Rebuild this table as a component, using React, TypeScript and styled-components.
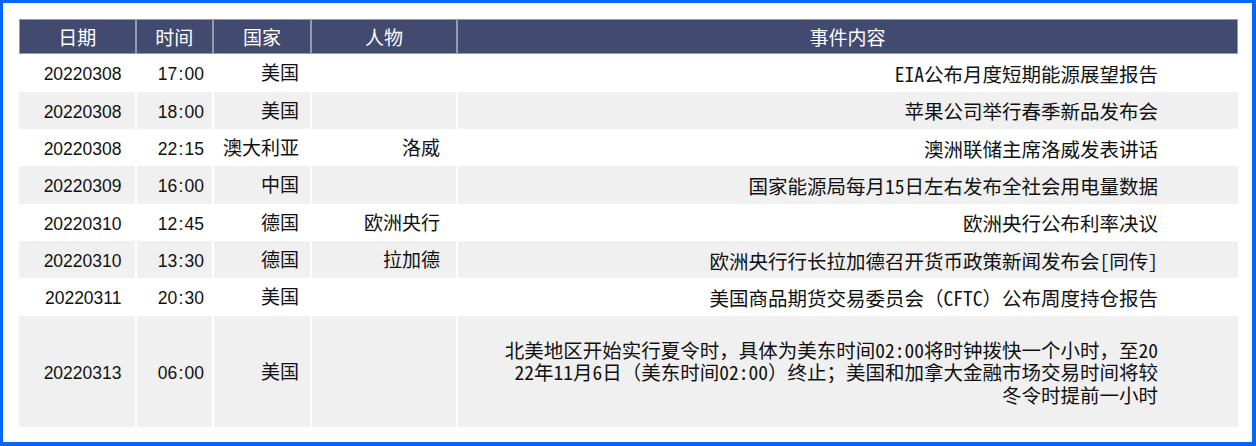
import React from 'react';
import styled, { createGlobalStyle } from 'styled-components';

const Global = createGlobalStyle`
  html, body { margin: 0; padding: 0; background: #ffffff; }
  body { width: 1256px; height: 446px; overflow: hidden; }
`;

const Frame = styled.div`
  box-sizing: border-box;
  width: 1256px;
  height: 446px;
  border-style: solid;
  border-color: #0066ff;
  border-width: 3px 4px 4px 3px;
  padding: 16px 14px 14px 16px;
  background: #ffffff;
`;

const Table = styled.table`
  width: 1219px;
  table-layout: fixed;
  border-collapse: separate;
  border-spacing: 0;
`;

const HeadRow = styled.tr`
  height: 35.3px;
`;

const HeadCell = styled.th<{ $w: number }>`
  width: ${p => p.$w}px;
  box-sizing: border-box;
  padding: 0;
  background: #424a6f;
  border: 1px solid #9499b4;
  color: #ffffff;
  font-family: "Noto Sans CJK SC", sans-serif;
  font-weight: 400;
  font-size: 19px;
  line-height: 24px;
  text-align: center;
  vertical-align: middle;
`;

const Row = styled.tr<{ $shade: boolean; $h: number }>`
  height: ${p => p.$h}px;
  background: ${p => (p.$shade ? '#f0f0f0' : '#ffffff')};
`;

const Cell = styled.td<{ $pad: number; $num?: boolean }>`
  box-sizing: border-box;
  padding: 3px ${p => p.$pad}px 0 4px;
  border-left: 1px solid #ffffff;
  border-right: 1px solid #ffffff;
  &:first-child { border-left: none; }
  &:last-child { border-right: none; }
  color: #111111;
  font-family: "Liberation Sans", "Noto Sans CJK SC", sans-serif;
  font-size: ${p => (p.$num ? '17.5px' : '19px')};
  line-height: 24px;
  text-align: right;
  vertical-align: middle;
  white-space: nowrap;
`;

const Colon = styled.span`
  margin: 0 1.2px;
`;

const EventCell = styled.td`
  box-sizing: border-box;
  padding: 3px 80px 0 8px;
  border-left: 1px solid #ffffff;
  color: #111111;
  text-align: right;
  vertical-align: middle;
`;

const EventText = styled.span`
  display: inline-block;
  max-width: 33.75em;
  font-family: "Noto Sans Mono CJK SC", "Noto Sans CJK SC", monospace;
  font-size: 19.5px;
  line-height: 22.5px;
  text-align: right;
  word-break: break-all;
`;

type Item = { date: string; time: string; country: string; person: string; event: string; tall?: boolean };

const items: Item[] = [
  { date: '20220308', time: '17:00', country: '美国', person: '', event: 'EIA公布月度短期能源展望报告' },
  { date: '20220308', time: '18:00', country: '美国', person: '', event: '苹果公司举行春季新品发布会' },
  { date: '20220308', time: '22:15', country: '澳大利亚', person: '洛威', event: '澳洲联储主席洛威发表讲话' },
  { date: '20220309', time: '16:00', country: '中国', person: '', event: '国家能源局每月15日左右发布全社会用电量数据' },
  { date: '20220310', time: '12:45', country: '德国', person: '欧洲央行', event: '欧洲央行公布利率决议' },
  { date: '20220310', time: '13:30', country: '德国', person: '拉加德', event: '欧洲央行行长拉加德召开货币政策新闻发布会[同传]' },
  { date: '20220311', time: '20:30', country: '美国', person: '', event: '美国商品期货交易委员会（CFTC）公布周度持仓报告' },
  {
    date: '20220313',
    time: '06:00',
    country: '美国',
    person: '',
    event:
      '北美地区开始实行夏令时，具体为美东时间02:00将时钟拨快一个小时，至2022年11月6日（美东时间02:00）终止；美国和加拿大金融市场交易时间将较冬令时提前一小时',
    tall: true,
  },
];

const columns = [
  { title: '日期', w: 116.5 },
  { title: '时间', w: 77.5 },
  { title: '国家', w: 98 },
  { title: '人物', w: 146 },
  { title: '事件内容', w: 781 },
];

function Time({ value }: { value: string }) {
  const [h, m] = value.split(':');
  return (
    <>
      {h}
      <Colon>:</Colon>
      {m}
    </>
  );
}

export default function App() {
  return (
    <>
      <Global />
      <Frame>
        <Table>
          <thead>
            <HeadRow>
              {columns.map(c => (
                <HeadCell key={c.title} $w={c.w}>
                  {c.title}
                </HeadCell>
              ))}
            </HeadRow>
          </thead>
          <tbody>
            {items.map((it, i) => (
              <Row key={i} $shade={i % 2 === 1} $h={it.tall ? 111.4 : 37.33}>
                <Cell $pad={13} $num>
                  {it.date}
                </Cell>
                <Cell $pad={8} $num>
                  <Time value={it.time} />
                </Cell>
                <Cell $pad={11}>{it.country}</Cell>
                <Cell $pad={16}>{it.person}</Cell>
                <EventCell>
                  <EventText>{it.event}</EventText>
                </EventCell>
              </Row>
            ))}
          </tbody>
        </Table>
      </Frame>
    </>
  );
}
